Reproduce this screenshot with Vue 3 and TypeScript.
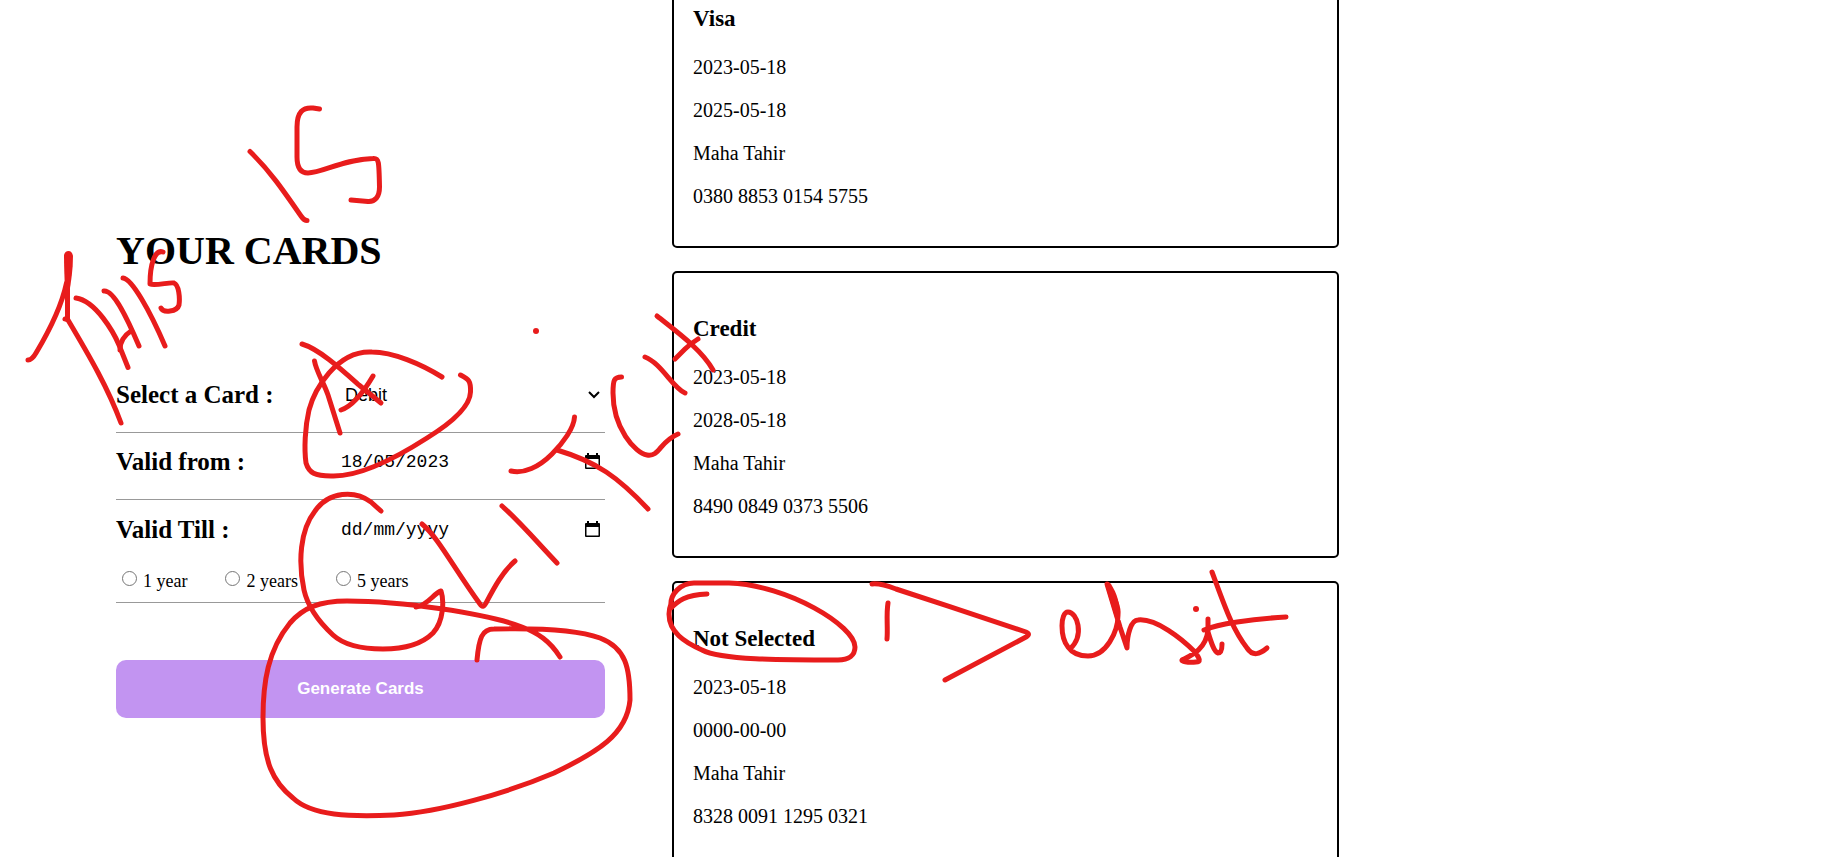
<script setup lang="ts">
import { onMounted, ref } from 'vue'

interface Card {
  type: string
  from: string
  till: string
  holder: string
  number: string
}

const cards: Card[] = [
  { type: 'Visa', from: '2023-05-18', till: '2025-05-18', holder: 'Maha Tahir', number: '0380 8853 0154 5755' },
  { type: 'Credit', from: '2023-05-18', till: '2028-05-18', holder: 'Maha Tahir', number: '8490 0849 0373 5506' },
  { type: 'Not Selected', from: '2023-05-18', till: '0000-00-00', holder: 'Maha Tahir', number: '8328 0091 1295 0321' },
]

const cardTypes = ['Debit', 'Credit', 'Visa']
const terms = ['1 year', '2 years', '5 years']

const selectedType = ref('Debit')
const validFrom = ref('18/05/2023')
const validTill = ref('')
const term = ref('')

const list = ref<HTMLElement | null>(null)

onMounted(() => {
  if (list.value) list.value.scrollTop = 63
})

const strokes: string[] = [
  // handwriting above and beside the title
  'M319.5 109 L313 108 C303 107 297 112 297 127 V157 C297 168 301 173 308 173 C322 173 344 159 373 158.5 C379 158 379 161 379.5 187 C379.5 197 375 202 368 201.5 L351 200',
  'M250 151.5 C270 171 283 190 301 216 Q304 220.5 307 220.5',
  'M67.5 280 V319 M66.5 283 C61 309 48 333 36 353 Q32 360 28 360',
  'M65 319 L68 320 C90 357 108 388 121 423',
  'M76 298 C96 301 114 333 119 345 L128 367.5',
  'M104 291 C114 290 128 320 139 346',
  'M120 350 Q120 338 131 331',
  'M123 278 C132 279 150 311 165 346',
  'M163 252 C155 249 150 264 150 284 C155 286 170 282 174 283 C179 285 180 298 179 305 C177 312 163 313 161 308',
  // around the card select
  'M302 344 C319 349 341 369 359 385 L381 403',
  'M373 376 Q356 405 341 410',
  'M314.5 361 C316 371 324 383 328 395 L340 433',
  'M442 377 C421 364 393 352 372 352 C336 350 314 391 309 410 C305 427 304 449 306 463 C309 473 315 476 331 476 C353 477 385 465 427 438 C448 425 470 408 470.5 392 C471 380 468 379 460.5 375',
  // arrows and marks between the columns
  'M574.5 417 C574 428 563 443 552 454 C539 467 524 474 511 471',
  'M557 450 C597 462 618 477 648 509',
  'M621.5 377 C614 377 613 380 613 393 C613 428 635 453 647 455 C660 457 659 442 678 434',
  'M645 357 C661 363 673 388 685 393',
  'M657 316 C677 332 702 350 713 370',
  'M698 339 Q690 344 685 349 L675 359',
  'M502 506 C520 522 537 542 557 563',
  // valid till loop and tick
  'M381 511 L371 502 C355 490 329 491 315 511 C300 530 298 562 304 590 C308 608 319 622 333 635 C345 646 366 649 383 649 C404 649 421 645 433 633 C444 621 444 600 441 591 C434 593 427 606 416 607',
  'M422 524 C438 537 453 567 480 604 Q483 609 486 603 C494 588 503 571 515 561',
  // generate button loop
  'M560 657 C550 641 538 633 522 627 C486 613 400 601 347 601 C319 601 303 608 290 623 C268 650 263 682 263 718 C263 762 273 782 293 798 C312 816 350 817 394 815 C440 812 507 793 554 773 C598 752 627 734 630 700 C630 668 626 648 600 638 C575 629 535 628 494 629 C482 629 479 638 477 660',
  // heading of the third card
  'M707 594 C685 595 678 601 671 608 C669 593 682 583 694 583 H729 C788 585 855 626 855 647 C855 655 849 660 838 660 C780 660 721 660 702 650 C684 642 669 632 669 614 Q669 609 671 604',
  'M888 603 C886 615 888 627 887 639',
  'M872 584 Q880 583 896 589 C939 603 984 618 1026 632 Q1031 634 1026 637 L945 680',
  'M1070 649 C1085 635 1077 612 1068 612 C1060 612 1060 637 1068 647 C1073 654 1080 656 1088 656 C1106 656 1118 632 1118 615 C1119 607 1115 599 1107 584 L1120 627 L1127 648 C1127 635 1131 620 1138 620 C1156 618 1182 639 1195 652 C1200 659 1201 662 1196 662 C1187 663 1181 661 1182 660 C1190 656 1206 650 1208 630 V619 V632 C1211 642 1214 652 1218 653 C1221 653 1222 649 1222 644',
  'M1204 630 C1218 624 1251 619 1286 617',
  'M1212 572 C1224 604 1232 629 1247 648 C1253 657 1260 654 1267 648',
]

// pen pressure areas, wider than the regular stroke
const blots: string[] = [
  'M64 255 Q65 251 68.5 251 Q72 251 73 256 C73 270 71 282 69 294 L65 290 Q64 268 64 255 Z',
  'M1105 584 Q1108 580 1111 584 C1117 594 1120 602 1120 620 L1117 624 Z',
]
</script>

<template>
  <main class="page">
    <form class="form" @submit.prevent>
      <h1 class="title">YOUR CARDS</h1>

      <div class="row">
        <label for="card-type">Select a Card :</label>
        <div class="control">
          <select id="card-type" v-model="selectedType">
            <option v-for="t in cardTypes" :key="t">{{ t }}</option>
          </select>
          <svg class="chevron" viewBox="0 0 12 8" aria-hidden="true">
            <path d="M1 1 L6 6 L11 1" />
          </svg>
        </div>
      </div>

      <div class="row">
        <label for="valid-from">Valid from :</label>
        <div class="control">
          <input id="valid-from" v-model="validFrom" class="date" type="text" />
          <button class="picker" type="button" aria-label="Pick start date">
            <svg viewBox="0 0 15 17" aria-hidden="true">
              <path d="M2 0h2v2h7V0h2v2h1q1 0 1 1v12q0 1-1 1H1q-1 0-1-1V3q0-1 1-1h1zM1.500 6v8.500h12V6z" />
            </svg>
          </button>
        </div>
      </div>

      <div class="row last">
        <label for="valid-till">Valid Till :</label>
        <div class="control">
          <input id="valid-till" v-model="validTill" class="date" type="text" placeholder="dd/mm/yyyy" />
          <button class="picker" type="button" aria-label="Pick end date">
            <svg viewBox="0 0 15 17" aria-hidden="true">
              <path d="M2 0h2v2h7V0h2v2h1q1 0 1 1v12q0 1-1 1H1q-1 0-1-1V3q0-1 1-1h1zM1.500 6v8.500h12V6z" />
            </svg>
          </button>
        </div>
        <div class="terms">
          <label v-for="t in terms" :key="t" class="term">
            <input v-model="term" type="radio" name="term" :value="t" />
            <span>{{ t }}</span>
          </label>
        </div>
      </div>

      <button class="generate" type="submit">Generate Cards</button>
    </form>

    <section ref="list" class="cards">
      <article v-for="c in cards" :key="c.number" class="card">
        <h3>{{ c.type }}</h3>
        <p>{{ c.from }}</p>
        <p>{{ c.till }}</p>
        <p>{{ c.holder }}</p>
        <p>{{ c.number }}</p>
      </article>
    </section>

    <svg class="ink" aria-hidden="true">
      <path v-for="(d, i) in strokes" :key="i" :d="d" />
      <path v-for="(d, i) in blots" :key="'b' + i" class="blot" :d="d" />
      <circle cx="536" cy="331" r="3" />
      <circle cx="1196" cy="609" r="3" />
    </svg>
  </main>
</template>

<style>
body {
  margin: 0;
  background: #fff;
}
</style>

<style scoped>
.page {
  position: relative;
  display: grid;
  grid-template-columns: 489fr 667fr 432fr;
  column-gap: 67px;
  height: 100vh;
  padding-left: 116px;
  overflow: hidden;
  box-sizing: border-box;
  color: #000;
  font-family: "Liberation Serif", "Times New Roman", serif;
}

.form {
  padding-top: 228px;
}

.title {
  margin: 0 0 92px;
  font-size: 40px;
  line-height: 46px;
}

.row {
  display: grid;
  grid-template-columns: 225px 1fr;
  align-items: center;
  padding: 14px 0 23px;
  border-bottom: 1px solid #999;
  font-size: 25px;
  line-height: 29px;
  font-weight: bold;
}

.row.last {
  padding: 15px 0 10px;
}

.control {
  display: flex;
  align-items: center;
  height: 29px;
}

select {
  flex: 1;
  min-width: 0;
  padding: 0 4px;
  border: 0;
  appearance: none;
  background: transparent;
  color: #000;
  font: 18px/24px "Liberation Sans", Arial, sans-serif;
}

.chevron {
  width: 12px;
  height: 8px;
  margin-right: 5px;
  fill: none;
  stroke: #000;
  stroke-width: 2;
}

.date {
  flex: 1;
  min-width: 0;
  padding: 0;
  border: 0;
  background: transparent;
  color: #000;
  font: 18px/24px "Liberation Mono", Consolas, monospace;
}

.date::placeholder {
  color: #000;
  opacity: 1;
}

.picker {
  display: flex;
  margin: 0 5px 0 0;
  padding: 0;
  border: 0;
  background: transparent;
}

.picker svg {
  width: 15px;
  height: 17px;
}

.terms {
  display: flex;
  grid-column: 1 / -1;
  gap: 38px;
  margin-top: 26px;
  padding-left: 6px;
}

.term {
  display: flex;
  align-items: flex-start;
  gap: 6px;
  font-size: 18px;
  line-height: 22px;
  font-weight: normal;
}

.term input {
  width: 15px;
  height: 15px;
  margin: 1px 0 0;
  box-sizing: border-box;
  border: 1px solid #767676;
  border-radius: 50%;
  appearance: none;
  background: #fff;
}

.term input:checked {
  border: 4px solid #0075ff;
}

.generate {
  width: 100%;
  height: 58px;
  margin-top: 57px;
  padding: 0;
  border: 0;
  border-radius: 10px;
  background: #c294f1;
  color: #fff;
  font: bold 17px/20px "Liberation Sans", Arial, sans-serif;
}

.cards {
  display: flex;
  flex-direction: column;
  gap: 23px;
  padding: 24px 0 80px;
  overflow-y: auto;
  scrollbar-width: none;
}

.card {
  flex: none;
  padding: 19px 19px 18px;
  border: 2px solid #000;
  border-radius: 5px;
}

.card h3 {
  margin: 24px 0;
  font-size: 23px;
  line-height: 26px;
}

.card p {
  margin: 20px 0;
  font-size: 20px;
  line-height: 23px;
}

.ink {
  position: absolute;
  inset: 0;
  width: 100%;
  height: 100%;
  pointer-events: none;
  fill: none;
  stroke: #e81c1c;
  stroke-width: 5;
  stroke-linecap: round;
  stroke-linejoin: round;
}

.ink .blot {
  fill: #e81c1c;
  stroke: none;
}

.ink circle {
  fill: #e81c1c;
  stroke: none;
}
</style>
